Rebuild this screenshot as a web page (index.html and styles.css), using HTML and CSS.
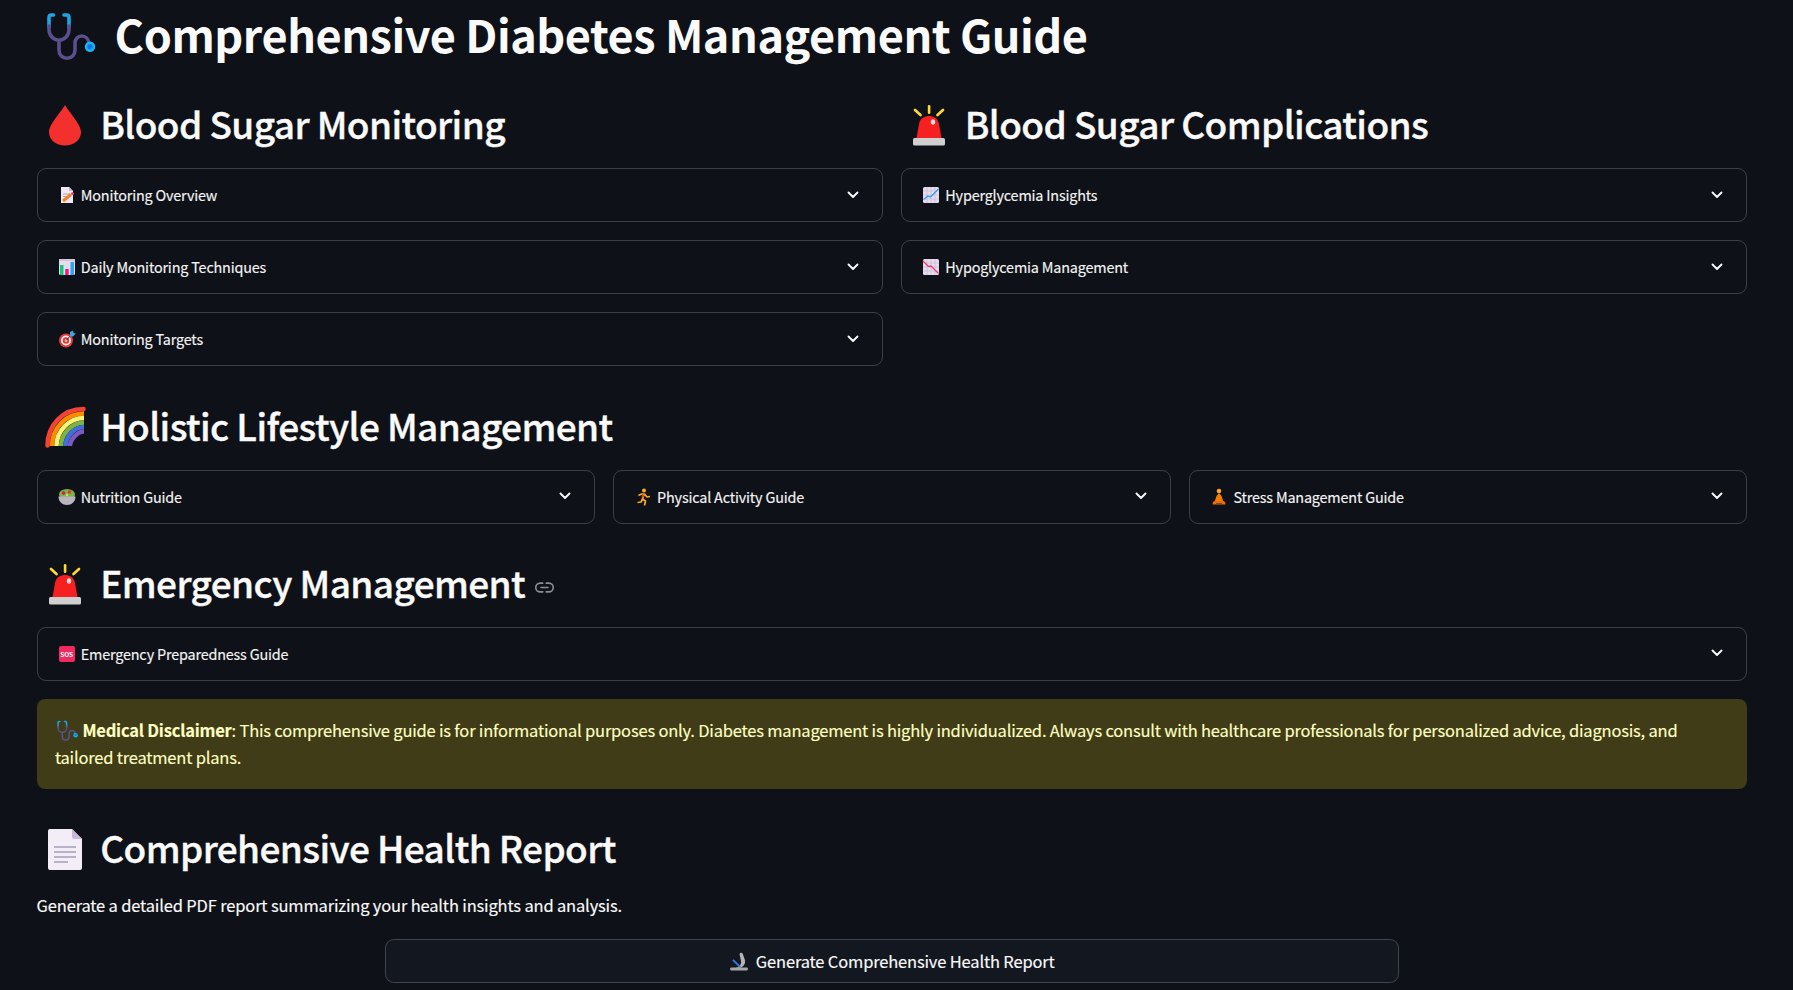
FILE: index.html
```html
<!DOCTYPE html>
<html lang="en">
<head>
<meta charset="utf-8">
<title>Comprehensive Diabetes Management Guide</title>
<link rel="stylesheet" href="styles.css">
</head>
<body>
<svg class="defs" width="0" height="0" aria-hidden="true">
  <defs>
    <symbol id="steth" viewBox="0 0 56 56">
      <path d="M7 18V8.500Q7 6 9.500 6H11.500M27 18V8.500Q27 6 24.500 6H22" fill="none" stroke="#1ea5e6" stroke-width="3.600" stroke-linecap="round"/>
      <path d="M7 17V20.500C7 27 12 31.300 17 31.300S27 27 27 20.500V17M17 31.300V41C17 46 20.500 49.300 25 49.300S33 46 33 41V34C33 30 36 27 39.700 27S46.500 30 47 34" fill="none" stroke="#5a4f8f" stroke-width="3.600" stroke-linecap="round"/>
      <circle cx="48" cy="37.700" r="5.200" fill="#19b5f5"/>
      <circle cx="48" cy="37.700" r="2.700" fill="#1276e8"/>
    </symbol>
    <symbol id="drop" viewBox="0 0 48 48">
      <path d="M24 4C21 10 8 23 8 31C8 39 15 44.500 24 44.500S40 39 40 31C40 23 27 10 24 4Z" fill="#f4302e"/>
    </symbol>
    <symbol id="alarm" viewBox="0 0 48 48">
      <rect x="22.800" y="4" width="2.600" height="9" rx="1.200" fill="#fdd835"/>
      <path d="M10 9L15.500 14M38 9L32.500 14" stroke="#fdd835" stroke-width="2.700" stroke-linecap="round"/>
      <path d="M11.500 37L14 23C15 17 20 15 24 15S33 17 34 23L36.500 37Z" fill="#f5201f"/>
      <ellipse cx="28" cy="21" rx="2.200" ry="2.800" fill="#ffd9d6"/>
      <rect x="8" y="37" width="32" height="7.600" rx="1.500" fill="#cfcfcf"/>
    </symbol>
    <symbol id="rainbow" viewBox="0 0 48 48">
      <path d="M6.500 42.500C6.500 22 22 6 42.500 6" fill="none" stroke="#f44336" stroke-width="4.500" stroke-linecap="round"/>
      <path d="M11 43C11 25 25 10.500 43 10.500" fill="none" stroke="#fb8c00" stroke-width="4.500"/>
      <path d="M15.500 43C15.500 28 28 15 43 15" fill="none" stroke="#fff176" stroke-width="4.500"/>
      <path d="M20 43C20 31 31 19.500 43 19.500" fill="none" stroke="#7cb342" stroke-width="4.500"/>
      <path d="M24.500 43C24.500 34 33 24 43 24" fill="none" stroke="#3f6fd8" stroke-width="4.500"/>
      <path d="M29 43C29 37 36 28.500 43 28.500" fill="none" stroke="#7e57c2" stroke-width="4.500"/>
    </symbol>
    <symbol id="doc" viewBox="0 0 48 48">
      <path d="M9 4H31L41 14V43Q41 45 39 45H9Q7 45 7 43V6Q7 4 9 4Z" fill="#f3edf7"/>
      <path d="M31 4L41 14H33Q31 14 31 12Z" fill="#c9b8d8"/>
      <path d="M13 22H35M13 27H35M13 32H35M13 37H27" stroke="#a79eb8" stroke-width="1.500"/>
    </symbol>
    <symbol id="memo" viewBox="0 0 18 18">
      <path d="M3 1H11L15 5V17H3Z" fill="#f0e9f5"/>
      <path d="M11 1L15 5H11Z" fill="#c5b4d6"/>
      <path d="M5 8H12M5 10.500H9" stroke="#b0a6bd" stroke-width="1"/>
      <path d="M5 15L13 8.500" stroke="#f58220" stroke-width="3"/>
      <circle cx="14.500" cy="7.500" r="1.500" fill="#ef3f75"/>
    </symbol>
    <symbol id="bars" viewBox="0 0 18 18">
      <rect x="1" y="1" width="16" height="16" rx="1.500" fill="#e6dcee"/>
      <path d="M1 1H17V3H1Z" fill="#d1c4dc"/>
      <rect x="2" y="7" width="3.500" height="10" fill="#12c878"/>
      <rect x="7.200" y="11" width="3.500" height="6" fill="#ec1a8c"/>
      <rect x="12.500" y="4" width="3.500" height="13" fill="#2aa5f0"/>
    </symbol>
    <symbol id="target" viewBox="0 0 18 18">
      <circle cx="8" cy="10.500" r="7" fill="#e53935"/>
      <circle cx="8" cy="10.500" r="5" fill="#f5f0f0"/>
      <circle cx="8" cy="10.500" r="3.200" fill="#e53935"/>
      <circle cx="8" cy="10.500" r="1.200" fill="#f5f0f0"/>
      <path d="M8 10.500L14 4" stroke="#37474f" stroke-width="1"/>
      <path d="M12 2L15 0.500L15.500 3L17.800 3.500L15 6.500H12Z" fill="#3ba7e8"/>
    </symbol>
    <symbol id="up" viewBox="0 0 18 18">
      <rect x="1" y="1" width="16" height="16" rx="1.500" fill="#e6dcee"/>
      <path d="M5 1V17M9 1V17M13 1V17M1 5H17M1 9H17M1 13H17" stroke="#c5b7d2" stroke-width=".6"/>
      <path d="M1.500 13.500L6 10L8.500 11L16.500 3" fill="none" stroke="#2a9df0" stroke-width="1.300"/>
    </symbol>
    <symbol id="down" viewBox="0 0 18 18">
      <rect x="1" y="1" width="16" height="16" rx="1.500" fill="#e6dcee"/>
      <path d="M5 1V17M9 1V17M13 1V17M1 5H17M1 9H17M1 13H17" stroke="#c5b7d2" stroke-width=".6"/>
      <path d="M1 3L6.500 8.500L9 8L16.500 15.500" fill="none" stroke="#ec3f6e" stroke-width="1.300"/>
    </symbol>
    <symbol id="salad" viewBox="0 0 18 18">
      <ellipse cx="9" cy="6.500" rx="8" ry="5.500" fill="#7cb342"/>
      <circle cx="5.500" cy="5" r="1.800" fill="#d81b60"/>
      <circle cx="11.500" cy="4" r="1.800" fill="#e53935"/>
      <circle cx="9" cy="7" r="1.200" fill="#c6e26a"/>
      <path d="M0.500 8.500H17.500C17.500 14 13.500 17 9 17S0.500 14 0.500 8.500Z" fill="#b9b4bd"/>
    </symbol>
    <symbol id="run" viewBox="0 0 18 18">
      <circle cx="10" cy="2.500" r="2" fill="#ffa726"/>
      <path d="M4.500 7.500L7.500 6H10.500L13 9L16 8.500M10 6.500L8.500 11L11.500 13L10.500 17.500M8.500 11L7 14L3.500 14.500" fill="none" stroke="#f9a825" stroke-width="1.700" stroke-linejoin="round"/>
      <path d="M8 6.500H10.500L9.500 9.500H7.500Z" fill="#d84315"/>
    </symbol>
    <symbol id="yoga" viewBox="0 0 18 18">
      <circle cx="9" cy="3" r="2.300" fill="#ffa726"/>
      <path d="M9 5L11.500 8L13.500 14H4.500L6.500 8Z" fill="#f57c00"/>
      <path d="M2.500 16.500Q2.500 13 5 13H13Q15.500 13 15.500 16.500Z" fill="#ef6c00"/>
      <path d="M6 15.500H12" stroke="#6d4c41" stroke-width="1"/>
    </symbol>
    <symbol id="scope" viewBox="0 0 18 18">
      <path d="M9.500 3C9.500 1.500 11.500 1 12.300 2.300L13.800 6.500C15.500 10 14 14 10 15H6C9 14.500 11.500 12 10.800 9L9.500 3Z" fill="#b5b5b5"/>
      <path d="M3.500 8L10 14.300" stroke="#2a7de1" stroke-width="1.800"/>
      <rect x="1" y="14.800" width="16" height="2.700" rx="1" fill="#a8a8a8"/>
    </symbol>
    <symbol id="chev" viewBox="0 0 18 18">
      <path d="M4.500 6.500L9 11L13.500 6.500" fill="none" stroke="#fafafa" stroke-width="1.900" stroke-linecap="round" stroke-linejoin="round"/>
    </symbol>
    <symbol id="link" viewBox="0 0 24 24">
      <path d="M10 7H7A5 5 0 0 0 7 17H10M14 7H17A5 5 0 0 1 17 17H14M8 12H16" fill="none" stroke="#8c8f96" stroke-width="1.800" stroke-linecap="round"/>
    </symbol>
  </defs>
</svg>

<main class="page">
  <h1 class="title"><svg class="title-icon"><use href="#steth"/></svg>Comprehensive Diabetes Management Guide</h1>

  <div class="cols cols-2">
    <section class="col">
      <h2 class="heading"><svg class="h-icon"><use href="#drop"/></svg>Blood Sugar Monitoring</h2>
      <div class="stack">
        <div class="expander"><svg class="e-icon"><use href="#memo"/></svg><span class="e-label">Monitoring Overview</span><svg class="chev"><use href="#chev"/></svg></div>
        <div class="expander"><svg class="e-icon"><use href="#bars"/></svg><span class="e-label">Daily Monitoring Techniques</span><svg class="chev"><use href="#chev"/></svg></div>
        <div class="expander"><svg class="e-icon"><use href="#target"/></svg><span class="e-label">Monitoring Targets</span><svg class="chev"><use href="#chev"/></svg></div>
      </div>
    </section>
    <section class="col">
      <h2 class="heading"><svg class="h-icon"><use href="#alarm"/></svg>Blood Sugar Complications</h2>
      <div class="stack">
        <div class="expander"><svg class="e-icon"><use href="#up"/></svg><span class="e-label">Hyperglycemia Insights</span><svg class="chev"><use href="#chev"/></svg></div>
        <div class="expander"><svg class="e-icon"><use href="#down"/></svg><span class="e-label">Hypoglycemia Management</span><svg class="chev"><use href="#chev"/></svg></div>
      </div>
    </section>
  </div>

  <section class="block block-tight">
    <h2 class="heading"><svg class="h-icon"><use href="#rainbow"/></svg>Holistic Lifestyle Management</h2>
    <div class="cols cols-3">
      <div class="expander"><svg class="e-icon"><use href="#salad"/></svg><span class="e-label">Nutrition Guide</span><svg class="chev"><use href="#chev"/></svg></div>
      <div class="expander"><svg class="e-icon"><use href="#run"/></svg><span class="e-label">Physical Activity Guide</span><svg class="chev"><use href="#chev"/></svg></div>
      <div class="expander"><svg class="e-icon"><use href="#yoga"/></svg><span class="e-label">Stress Management Guide</span><svg class="chev"><use href="#chev"/></svg></div>
    </div>
  </section>

  <section class="block">
    <h2 class="heading"><svg class="h-icon"><use href="#alarm"/></svg>Emergency Management<svg class="link-icon"><use href="#link"/></svg></h2>
    <div class="expander"><span class="sos e-icon">SOS</span><span class="e-label">Emergency Preparedness Guide</span><svg class="chev"><use href="#chev"/></svg></div>
  </section>

  <div class="alert"><svg class="alert-icon"><use href="#steth"/></svg> <strong>Medical Disclaimer</strong>: This comprehensive guide is for informational purposes only. Diabetes management is highly individualized. Always consult with healthcare professionals for personalized advice, diagnosis, and tailored treatment plans.</div>

  <section class="block">
    <h2 class="heading"><svg class="h-icon"><use href="#doc"/></svg>Comprehensive Health Report</h2>
    <p class="lead">Generate a detailed PDF report summarizing your health insights and analysis.</p>
    <button class="report-btn" type="button"><svg class="btn-icon"><use href="#scope"/></svg>Generate Comprehensive Health Report</button>
  </section>
</main>
</body>
</html>
```

FILE: styles.css
```css
html, body {
  margin: 0;
  background: #0e1117;
  height: 990px;
  overflow: hidden;
}

body {
  color: #fafafa;
  font-family: "Noto Sans CJK SC", "Noto Sans", sans-serif;
}

.defs {
  position: absolute;
}

.page {
  display: flex;
  flex-direction: column;
  padding: 0 45.700px 0 36.600px;
}

.title {
  box-sizing: border-box;
  display: flex;
  align-items: center;
  height: 73px;
  margin: 0;
  padding-bottom: 6px;
  font-size: 45px;
  font-weight: 700;
  letter-spacing: -0.450px;
  line-height: 67px;
}

.title-icon {
  width: 56px;
  height: 56px;
  margin: 6px 17px 0 5px;
  flex: none;
}

.cols {
  display: grid;
  column-gap: 18.300px;
}

.cols-2 {
  grid-template-columns: 1fr 1fr;
  margin-top: 22px;
}

.cols-3 {
  grid-template-columns: 1fr 1fr 1fr;
}

.col,
.block {
  display: flex;
  flex-direction: column;
}

.block {
  margin-top: 30px;
}

.block-tight {
  margin-top: 30.500px;
}

.heading {
  box-sizing: border-box;
  display: flex;
  align-items: center;
  height: 60px;
  margin: 0 0 13px;
  padding-bottom: 4px;
  font-size: 37px;
  font-weight: 500;
  letter-spacing: -0.600px;
  line-height: 56px;
  -webkit-text-stroke: 0.350px #fafafa;
}

.h-icon {
  width: 48px;
  height: 48px;
  margin: 4px 11.600px 0 4px;
  flex: none;
}

.link-icon {
  width: 21px;
  height: 21px;
  margin: 12px 0 0 9px;
  flex: none;
}

.stack {
  display: flex;
  flex-direction: column;
  gap: 18px;
}

.expander {
  box-sizing: border-box;
  display: flex;
  align-items: center;
  height: 54px;
  padding: 0 19px 0 20px;
  border: 1px solid rgba(250, 250, 250, 0.2);
  border-radius: 9px;
  font-size: 14.400px;
  letter-spacing: -0.180px;
}

.e-icon {
  width: 18px;
  height: 18px;
  margin-right: 5.200px;
  flex: none;
}

.btn-icon {
  width: 20px;
  height: 20px;
  margin-right: 6.500px;
  flex: none;
}

.e-label {
  flex: 1;
  line-height: 24px;
  color: #f4f4f4;
  -webkit-text-stroke: 0.150px #f4f4f4;
}

.chev {
  width: 18px;
  height: 18px;
  margin: -1px 1px 0 0;
  flex: none;
}

.sos {
  box-sizing: border-box;
  display: flex;
  align-items: center;
  justify-content: center;
  height: 16px;
  width: 16px;
  margin-left: 1px;
  margin-right: 6.200px;
  border-radius: 2px;
  background: #f0295f;
  color: #fff;
  font-size: 6.500px;
  font-weight: 700;
  line-height: 16px;
}

.alert {
  box-sizing: border-box;
  height: 90.500px;
  margin-top: 18px;
  padding: 18.500px 18.300px 17.500px;
  border-radius: 8px;
  background: #3f3c17;
  color: #ffffc2;
  font-size: 16.500px;
  letter-spacing: -0.200px;
  line-height: 27.400px;
  -webkit-text-stroke: 0.150px #ffffc2;
}

.alert-icon {
  width: 24px;
  height: 24px;
  vertical-align: -6px;
}

.alert strong {
  font-weight: 700;
}

.block:last-child .heading {
  margin-bottom: 11.500px;
}

.lead {
  margin: 0 0 20px;
  font-size: 16.500px;
  letter-spacing: -0.170px;
  line-height: 28px;
  -webkit-text-stroke: 0.150px #fafafa;
}

.report-btn {
  display: flex;
  align-items: center;
  justify-content: center;
  box-sizing: border-box;
  width: 1014px;
  height: 44px;
  margin-left: 348.400px;
  border: 1px solid rgba(250, 250, 250, 0.2);
  border-radius: 9px;
  background: #13171f;
  color: #fafafa;
  font-family: inherit;
  font-size: 16.500px;
  letter-spacing: -0.170px;
  -webkit-text-stroke: 0.150px #fafafa;
}
```
